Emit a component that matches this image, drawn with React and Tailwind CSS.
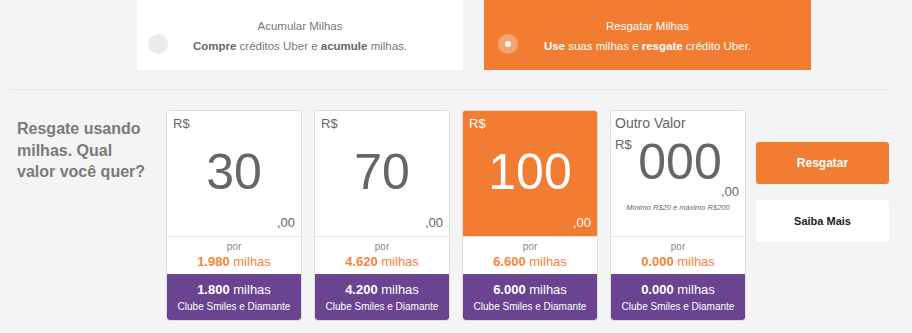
import React from 'react';

const values = [
  { value: '30', price: '1.980', club: '1.800' },
  { value: '70', price: '4.620', club: '4.200' },
  { value: '100', price: '6.600', club: '6.000', active: true },
];

function Footer({ price, club }) {
  return (
    <>
      <div className="h-[38px] flex flex-col items-center justify-center border-t border-[#e4e4e4] bg-white">
        <span className="text-[10px] leading-[12px] text-[#888]">por</span>
        <span className="text-[13px] leading-[17px] text-[#f5843c]">
          <b>{price}</b> milhas
        </span>
      </div>
      <div className="h-[46px] flex flex-col items-center justify-center bg-[#6a4391] rounded-b-[3px] text-white">
        <span className="text-[13px] leading-[17px]">
          <b>{club}</b> milhas
        </span>
        <span className="text-[10px] leading-[14px] mt-[2px]">Clube Smiles e Diamante</span>
      </div>
    </>
  );
}

function ValueCard({ value, price, club, active }) {
  return (
    <div className="w-[136px] h-[211px] flex flex-col border border-[#dedede] rounded-[3px] bg-white overflow-hidden">
      <div className={`h-[125px] flex flex-col px-[6px] pt-[5px] ${active ? 'bg-[#f37c33] text-white' : 'text-[#666]'}`}>
        <span className="text-[13px] leading-[15px]">R$</span>
        <span className="text-[50px] leading-[54px] text-center mt-[14px] font-light">{value}</span>
        <span className="text-[13px] leading-[15px] text-right mt-[16px]">,00</span>
      </div>
      <Footer price={price} club={club} />
    </div>
  );
}

export default function App() {
  return (
    <div className="w-[912px] h-[333px] bg-[#f4f4f4] overflow-hidden" style={{ fontFamily: '"Liberation Sans", Arial, sans-serif' }}>
      <div className="flex gap-[21px] pl-[137px]">
        <div className="w-[326px] h-[70px] bg-white flex items-center relative">
          <div className="absolute left-[11px] top-[34px] w-[20px] h-[20px] rounded-full bg-[#ebebeb]" />
          <div className="w-full flex flex-col items-center text-[11.5px] text-[#777] pt-[2px]">
            <span className="leading-[16px]">Acumular Milhas</span>
            <span className="leading-[16px] mt-[4px]">
              <b className="text-[#666]">Compre</b> créditos Uber e <b className="text-[#666]">acumule</b> milhas.
            </span>
          </div>
        </div>
        <div className="w-[327px] h-[70px] bg-[#f37c33] flex items-center relative">
          <div className="absolute left-[14px] top-[34px] w-[20px] h-[20px] rounded-full bg-[#f7a26c] flex items-center justify-center">
            <div className="w-[6px] h-[6px] rounded-full bg-white" />
          </div>
          <div className="w-full flex flex-col items-center text-[11.5px] text-white pt-[2px]">
            <span className="leading-[16px]">Resgatar Milhas</span>
            <span className="leading-[16px] mt-[4px]">
              <b>Use</b> suas milhas e <b>resgate</b> crédito Uber.
            </span>
          </div>
        </div>
      </div>

      <div className="ml-[10px] w-[880px] h-px bg-[#e6e6e6] mt-[19px]" />

      <div className="flex mt-[20px]">
        <div className="w-[166px] pl-[17px] pt-[8px] text-[16px] leading-[21.5px] font-bold text-[#7a7a7a]">
          Resgate usando<br />milhas. Qual<br />valor você quer?
        </div>
        <div className="flex gap-[12px]">
          {values.map((v) => (
            <ValueCard key={v.value} {...v} />
          ))}
          <div className="w-[136px] h-[211px] flex flex-col border border-[#dedede] rounded-[3px] bg-white overflow-hidden">
            <div className="h-[125px] flex flex-col px-[4px] pt-[4px] text-[#666] relative">
              <span className="text-[14px] leading-[16px]">Outro Valor</span>
              <span className="text-[13px] leading-[15px] mt-[6px]">R$</span>
              <span className="absolute left-0 right-0 top-[24px] text-[50px] leading-[54px] text-center font-light pl-[4px]">000</span>
              <span className="text-[13px] leading-[15px] text-right mt-[32px] pr-[2px]">,00</span>
              <span className="text-[7.5px] leading-[10px] italic text-center mt-[4px]">Mínimo R$20 e máximo R$200</span>
            </div>
            <Footer price="0.000" club="0.000" />
          </div>
        </div>
        <div className="ml-[10px] pt-[32px] flex flex-col gap-[16px]">
          <button className="w-[133px] h-[42px] rounded-[3px] bg-[#f37c33] text-white text-[12px] font-bold">Resgatar</button>
          <button className="w-[133px] h-[42px] rounded-[3px] bg-white text-[#222] text-[11px] font-bold">Saiba Mais</button>
        </div>
      </div>
    </div>
  );
}
